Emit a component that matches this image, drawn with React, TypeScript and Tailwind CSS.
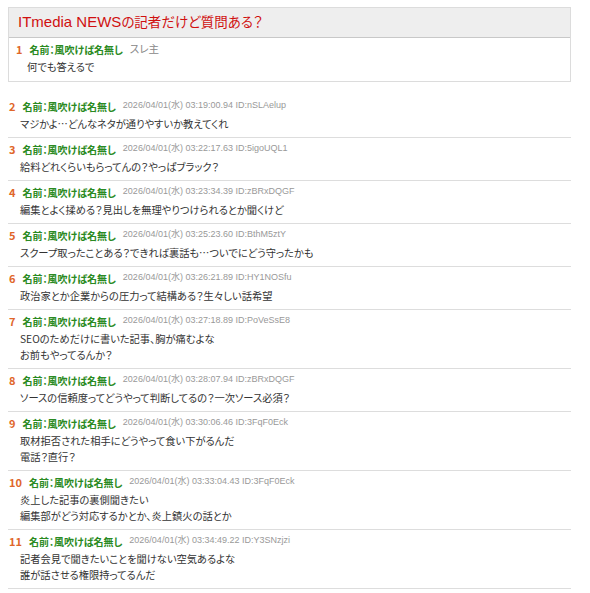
import React from 'react';

type Post = {
  no: number;
  time: string;
  id: string;
  lines: string[];
};

const posts: Post[] = [
  { no: 2, time: '03:19:00.94', id: 'nSLAelup', lines: ['マジかよ…どんなネタが通りやすいか教えてくれ'] },
  { no: 3, time: '03:22:17.63', id: '5igoUQL1', lines: ['給料どれくらいもらってんの？やっぱブラック？'] },
  { no: 4, time: '03:23:34.39', id: 'zBRxDQGF', lines: ['編集とよく揉める？見出しを無理やりつけられるとか聞くけど'] },
  { no: 5, time: '03:25:23.60', id: 'BthM5ztY', lines: ['スクープ取ったことある？できれば裏話も…ついでにどう守ったかも'] },
  { no: 6, time: '03:26:21.89', id: 'HY1NOSfu', lines: ['政治家とか企業からの圧力って結構ある？生々しい話希望'] },
  { no: 7, time: '03:27:18.89', id: 'PoVeSsE8', lines: ['SEOのためだけに書いた記事、胸が痛むよな', 'お前もやってるんか？'] },
  { no: 8, time: '03:28:07.94', id: 'zBRxDQGF', lines: ['ソースの信頼度ってどうやって判断してるの？一次ソース必須？'] },
  { no: 9, time: '03:30:06.46', id: '3FqF0Eck', lines: ['取材拒否された相手にどうやって食い下がるんだ', '電話？直行？'] },
  { no: 10, time: '03:33:04.43', id: '3FqF0Eck', lines: ['炎上した記事の裏側聞きたい', '編集部がどう対応するかとか、炎上鎮火の話とか'] },
  { no: 11, time: '03:34:49.22', id: 'Y3SNzjzi', lines: ['記者会見で聞きたいことを聞けない空気あるよな', '誰が話させる権限持ってるんだ'] },
];

const font = { fontFamily: '"Noto Sans CJK JP", "Noto Sans", sans-serif', fontFeatureSettings: '"palt"' };
const latin = { fontFamily: '"Liberation Sans", "Noto Sans CJK JP", sans-serif' };

const PostHeader: React.FC<{ no: number; children: React.ReactNode }> = ({ no, children }) => (
  <div className="flex items-center h-[16px] whitespace-nowrap">
    <span className="text-[11px] font-bold text-[#e0662a] mr-[7px]">{no}</span>
    <span className="text-[10px] font-bold text-[#2a8a22] mr-[7px]">名前：風吹けば名無し</span>
    {children}
  </div>
);

export default function App() {
  return (
    <div className="min-h-screen bg-white" style={font}>
      <div className="w-[563px] ml-2 pt-[7px]">
        {/* thread title + opening post */}
        <div className="border border-[#dcdcdc]">
          <div className="h-[30px] bg-[#eeeeee] border-b border-[#c8c8c8] flex items-center px-[9px]">
            <h1 className="text-[15px] text-[#d01010] whitespace-nowrap" style={latin}>
              ITmedia NEWS
              <span className="text-[13.5px]" style={font}>
                の記者だけど質問ある？
              </span>
            </h1>
          </div>
          <div className="pl-[7px] pt-[3px] pb-[6px]">
            <PostHeader no={1}>
              <span className="text-[10.5px] text-[#888]">スレ主</span>
            </PostHeader>
            <div className="mt-[2px] pl-[11px] text-[10.25px] leading-[16px] text-[#333]">何でも答えるで</div>
          </div>
        </div>

        {/* replies */}
        <div className="mt-[13px]">
          {posts.map((p) => (
            <div key={p.no} className="pl-[1px] pt-[3px] pb-[5px] border-b border-[#dddddd]">
              <PostHeader no={p.no}>
                <span className="text-[9px] text-[#999]" style={latin}>
                  2026/04/01(水) {p.time} ID:{p.id}
                </span>
              </PostHeader>
              <div className="mt-[2px] pl-[11px] text-[10.25px] leading-[16px] text-[#333]">
                {p.lines.map((l, i) => (
                  <div key={i}>{l}</div>
                ))}
              </div>
            </div>
          ))}
        </div>
      </div>
    </div>
  );
}
